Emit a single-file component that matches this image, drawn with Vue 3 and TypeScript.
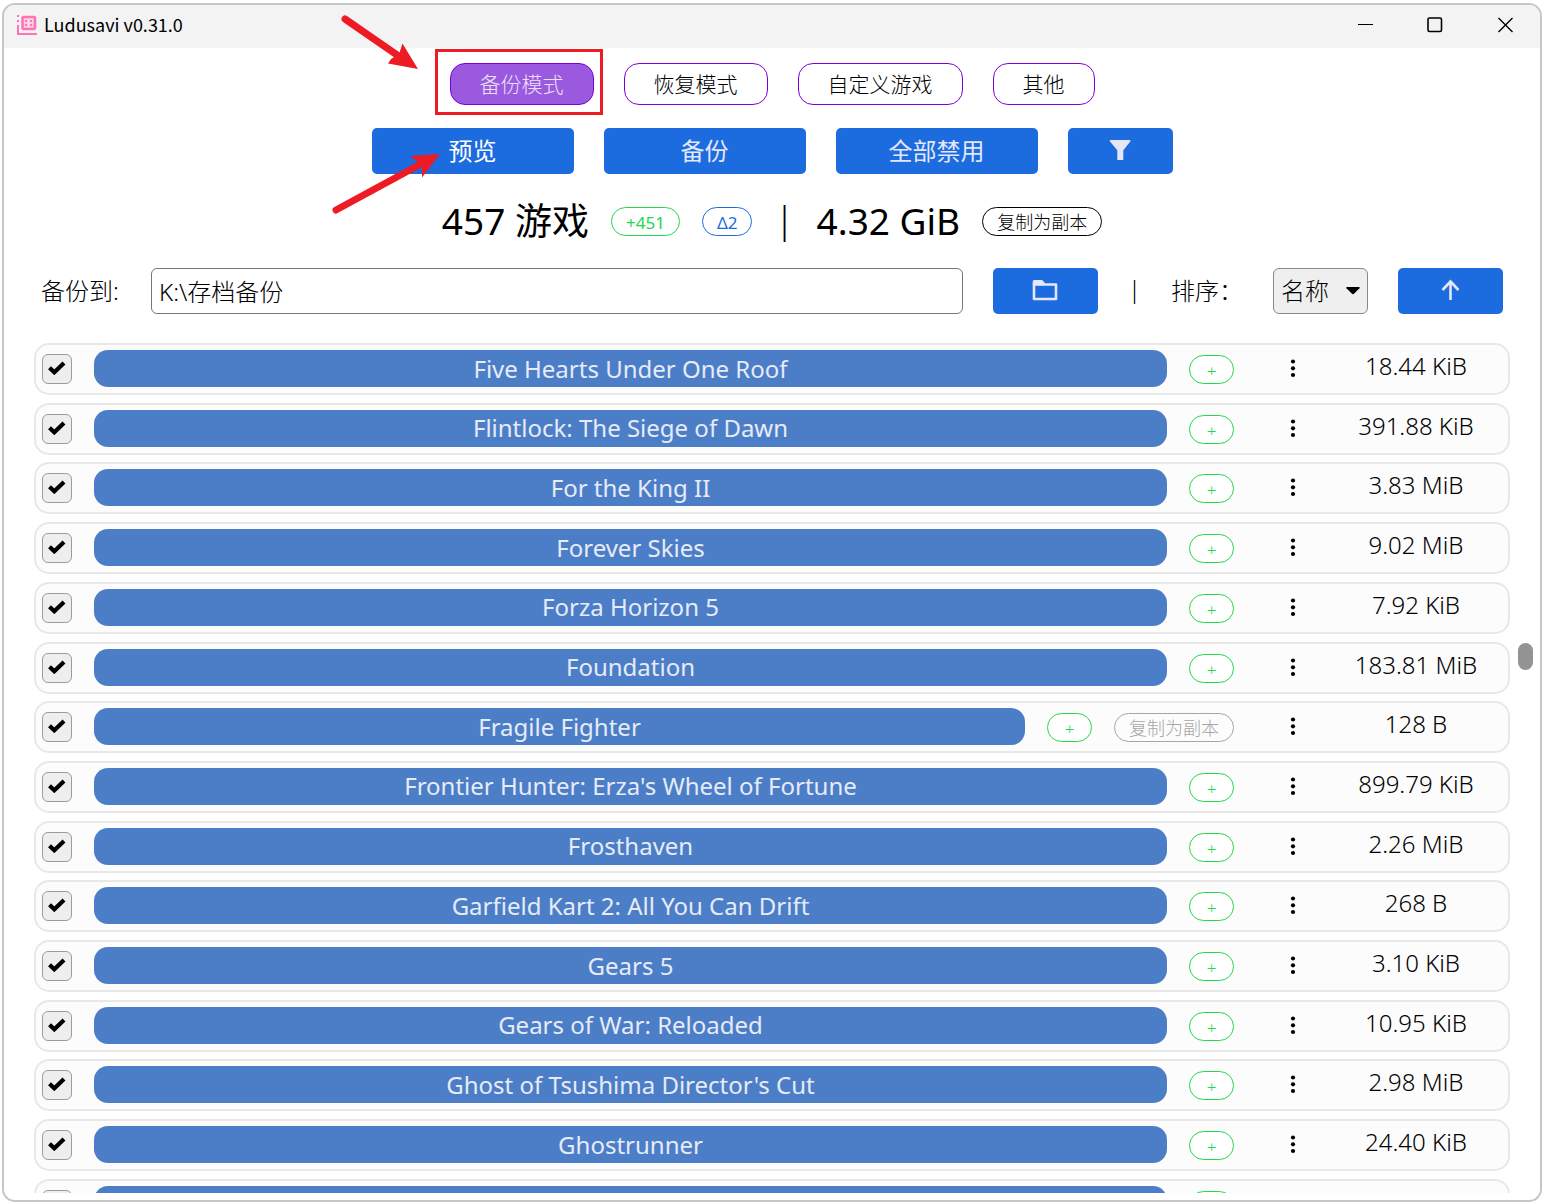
<script setup lang="ts">
import { ref } from 'vue'

interface Game {
  name: string
  size: string
  duplicated?: boolean
}

const tabs = ['备份模式', '恢复模式', '自定义游戏', '其他']
const activeTab = ref(tabs[0])
const target = ref('K:\\存档备份')
const sortKey = ref('名称')

const games = ref<Game[]>([
  { name: 'Five Hearts Under One Roof', size: '18.44 KiB' },
  { name: 'Flintlock: The Siege of Dawn', size: '391.88 KiB' },
  { name: 'For the King II', size: '3.83 MiB' },
  { name: 'Forever Skies', size: '9.02 MiB' },
  { name: 'Forza Horizon 5', size: '7.92 KiB' },
  { name: 'Foundation', size: '183.81 MiB' },
  { name: 'Fragile Fighter', size: '128 B', duplicated: true },
  { name: "Frontier Hunter: Erza's Wheel of Fortune", size: '899.79 KiB' },
  { name: 'Frosthaven', size: '2.26 MiB' },
  { name: 'Garfield Kart 2: All You Can Drift', size: '268 B' },
  { name: 'Gears 5', size: '3.10 KiB' },
  { name: 'Gears of War: Reloaded', size: '10.95 KiB' },
  { name: "Ghost of Tsushima Director's Cut", size: '2.98 MiB' },
  { name: 'Ghostrunner', size: '24.40 KiB' },
  { name: '', size: '' },
])
</script>

<template>
  <div class="window">
    <header class="titlebar">
      <svg class="logo" width="22" height="20" viewBox="0 0 22 20" fill="#ff73b3">
        <path d="M0 0h2v2H0zM0 5h2v2H0zM0 10h2v8h18v2H0z" />
        <rect x="5.500" y="2" width="12.500" height="12" rx="1" fill="#ffd3e6" stroke="#ff73b3" stroke-width="2.600" />
        <path d="M8 5h2v2H8zM13 5h2v2h-2zM8 9h2v2H8zM13 9h2v2h-2z" />
      </svg>
      <h1>Ludusavi v0.31.0</h1>
      <div class="controls">
        <button aria-label="Minimize">
          <svg width="16" height="16" viewBox="0 0 16 16"><path d="M1 7.500h15" stroke="#000" /></svg>
        </button>
        <button aria-label="Maximize">
          <svg width="16" height="16" viewBox="0 0 16 16"><rect x="1" y="1" width="13.5" height="13.5" rx="1.5" fill="none" stroke="#000" stroke-width="1.6" /></svg>
        </button>
        <button aria-label="Close">
          <svg width="16" height="16" viewBox="0 0 16 16"><path d="M1.500 1l14 14M15.500 1L1.500 15" stroke="#000" stroke-width="1.4" /></svg>
        </button>
      </div>
    </header>

    <nav class="tabs">
      <button
        v-for="tab in tabs"
        :key="tab"
        :class="{ active: tab === activeTab }"
        @click="activeTab = tab"
      >{{ tab }}</button>
    </nav>

    <div class="actions">
      <button class="primary wide hovered">预览</button>
      <button class="primary wide">备份</button>
      <button class="primary wide">全部禁用</button>
      <button class="primary" aria-label="Filter">
        <svg width="22" height="22" viewBox="0 0 22 22"><path d="M1.600 0h19c.8 0 1.100.8.7 1.400L14.300 10.200V19c0 .6-.4 1-1 1H9.300c-.6 0-1-.4-1-1v-8.800L1 1.400C.5.800.8 0 1.600 0z" fill="currentColor" /></svg>
      </button>
    </div>

    <div class="stats">
      <span>457 游戏</span>
      <span class="badge new">+451</span>
      <span class="badge changed">Δ2</span>
      <span class="divider">|</span>
      <span>4.32 GiB</span>
      <span class="badge copy">复制为副本</span>
    </div>

    <div class="toolbar">
      <label for="target" class="target-label">备份到:</label>
      <input id="target" v-model="target" type="text" />
      <button class="primary" aria-label="Browse">
        <svg width="26" height="22" viewBox="0 0 26 22"><path d="M2 4.500h22v14.500H2z" fill="none" stroke="currentColor" stroke-width="2.600" stroke-linejoin="round" /><path d="M.7 4.500V1.500Q.7 0 2.200 0H9.500q1 0 1.500.8L13 3.200v2H.7z" fill="currentColor" /></svg>
      </button>
      <span class="divider">|</span>
      <label for="sort">排序：</label>
      <div class="select">
        <select id="sort" v-model="sortKey"><option>名称</option></select>
        <svg width="14" height="8" viewBox="0 0 14 8"><path d="M1 0h12q1.200.3.5 1.200L8 6.800q-1 .9-2 0L.5 1.200Q-.2.3 1 0z" /></svg>
      </div>
      <button class="primary" aria-label="Ascending">
        <svg width="24" height="24" viewBox="0 0 24 24"><path d="M11.500 21V3M3.500 11l8-8.500 8 8.500" fill="none" stroke="currentColor" stroke-width="2.600" /></svg>
      </button>
    </div>

    <main class="list">
      <ul>
        <li v-for="(game, i) in games" :key="i">
          <span class="check">
            <input type="checkbox" checked :aria-label="game.name" />
            <svg width="18" height="14" viewBox="0 0 18 14"><path d="M1.500 6.700l4.800 4.600L16 2" fill="none" stroke="#000" stroke-width="4.200" /></svg>
          </span>
          <button class="name">{{ game.name }}</button>
          <span class="badge new plus">{{ game.name ? '+' : '' }}</span>
          <span v-if="game.duplicated" class="badge copy faded">复制为副本</span>
          <button class="more" aria-label="More">
            <svg width="6" height="20" viewBox="0 0 6 20"><circle cx="3" cy="2.500" r="2.100" /><circle cx="3" cy="9.300" r="2.100" /><circle cx="3" cy="16" r="2.100" /></svg>
          </button>
          <span class="size">{{ game.size }}</span>
        </li>
      </ul>
      <div class="thumb"></div>
    </main>

    <svg class="annotation" width="280" height="210" viewBox="330 10 280 210" fill="#ed1c24">
      <rect x="436.500" y="50.500" width="165" height="63" fill="none" stroke="#ed1c24" stroke-width="3" />
      <path d="M345 19L400 57M336 210L419 165" stroke="#ed1c24" stroke-width="7" stroke-linecap="round" />
      <path d="M418 69L402.500 43.500L399 54L391 59L388 63.500z" />
      <path d="M440 154L410 156L417 161L422 168L422 177.500z" />
    </svg>
  </div>
</template>

<style>
body {
  margin: 0;
  background: #fff;
}
</style>

<style scoped>
* {
  box-sizing: border-box;
}
.window {
  position: relative;
  display: flex;
  flex-direction: column;
  height: calc(100vh - 5px);
  margin: 3px 2px 2px;
  border: 2px solid #c6c6c6;
  border-radius: 13px;
  overflow: hidden;
  background: #fff;
  color: #000;
  font: 400 24px/32px "Noto Sans", "Noto Sans CJK SC", sans-serif;
}
button,
input,
select {
  font: inherit;
  color: inherit;
}
button {
  display: flex;
  align-items: center;
  justify-content: center;
  padding: 0;
  border: 0;
  background: none;
  cursor: pointer;
}
.titlebar {
  display: flex;
  flex: none;
  align-items: center;
  height: 43px;
  padding: 0 0 3px 13px;
  background: #f3f3f3;
}
h1 {
  flex: 1;
  margin: 0 0 0 5px;
  padding-bottom: 2px;
  font: 400 18px/24px "Noto Sans CJK SC", sans-serif;
}
.controls {
  display: flex;
}
.controls button {
  width: 70px;
  height: 40px;
}
.tabs,
.actions {
  display: flex;
  justify-content: center;
  gap: 30px;
}
.tabs {
  margin-top: 15px;
}
.tabs button {
  height: 42px;
  padding: 0 29px;
  border: 1px solid #7e00d8;
  border-radius: 15px;
  font-size: 21px;
  font-weight: 300;
}
.tabs .active {
  background: #9b59df;
  color: #ebe0f8;
}
.actions {
  margin-top: 23px;
}
.primary {
  flex: none;
  width: 105px;
  height: 46px;
  border-radius: 5px;
  background: #1c6ce0;
  color: #e4e7f8;
}
.wide {
  width: 202px;
}
.hovered {
  color: #fff;
}
.stats {
  display: flex;
  align-items: center;
  justify-content: center;
  gap: 22px;
  height: 94px;
  font-size: 37px;
  line-height: 48px;
}
.badge {
  flex: none;
  height: 29px;
  margin-top: 1px;
  padding: 0 14px;
  border: 1px solid #000;
  border-radius: 15px;
  font-size: 17px;
  line-height: 29px;
  text-align: center;
}
.copy {
  font-size: 18px;
  font-weight: 300;
}
.new {
  border-color: #22d84c;
  color: #22d84c;
}
.changed {
  border-color: #1c6ce0;
  color: #1c6ce0;
}
.divider {
  padding-bottom: 4px;
  font-weight: 300;
}
.toolbar {
  display: flex;
  align-items: center;
  gap: 30px;
  padding: 0 37px;
  font-weight: 300;
}
.target-label {
  width: 80px;
}
.toolbar input {
  flex: 1;
  min-width: 0;
  height: 46px;
  padding: 0 7px 2px;
  border: 1px solid #777;
  border-radius: 6px;
  background: #fff;
}
.select {
  position: relative;
}
.select select {
  display: block;
  width: 95px;
  height: 46px;
  padding: 0 7px;
  appearance: none;
  border: 1px solid #888;
  border-radius: 6px;
  background: #efefef;
}
.select svg {
  position: absolute;
  right: 8px;
  top: 19px;
  pointer-events: none;
}
.list {
  position: relative;
  flex: 1;
  min-height: 0;
  margin: 29px 0 7px;
  padding: 0 30px;
  overflow: hidden;
}
ul {
  display: flex;
  flex-direction: column;
  justify-content: space-between;
  height: calc(100% + 38px);
  margin: 0;
  padding: 0;
  list-style: none;
}
li {
  display: flex;
  flex: none;
  align-items: center;
  gap: 22px;
  height: 52px;
  padding: 0 6px;
  border: 2px solid #e8e8e8;
  border-radius: 15px;
  background: #fcfcfc;
}
.check {
  position: relative;
  flex: none;
  height: 30px;
}
.check input {
  display: block;
  width: 30px;
  height: 30px;
  margin: 0;
  appearance: none;
  border: 1px solid #9c9c9c;
  border-radius: 6px;
  background: #eee;
}
.check svg {
  position: absolute;
  left: 6px;
  top: 7px;
  pointer-events: none;
}
.name {
  flex: 1;
  min-width: 0;
  height: 37px;
  margin-bottom: 1px;
  border-radius: 14px;
  background: #4c7ec7;
  color: #e6ebf7;
}
.plus {
  width: 45px;
  background: #fff;
  font-weight: 300;
}
.faded {
  border-color: #a6a6a6;
  color: #a6a6a6;
}
.more {
  width: 74px;
  height: 37px;
}
.size {
  width: 172px;
  margin-left: -22px;
  padding-bottom: 6px;
  font-weight: 300;
  text-align: center;
}
.thumb {
  position: absolute;
  right: 7px;
  top: 300px;
  width: 15px;
  height: 27px;
  border-radius: 8px;
  background: #939393;
}
.annotation {
  position: absolute;
  left: calc(50% - 442px);
  top: 5px;
  pointer-events: none;
}
</style>
